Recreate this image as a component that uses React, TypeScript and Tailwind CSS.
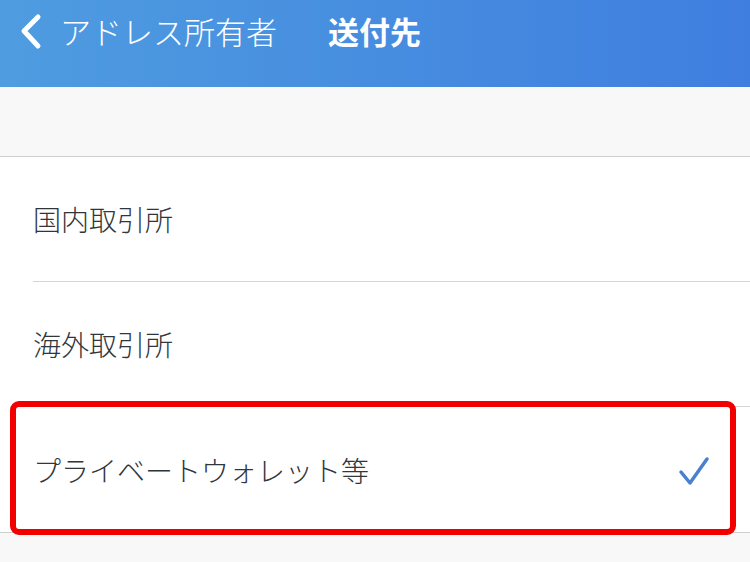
import React from "react";

type Row = { label: string; checked?: boolean; last?: boolean };

const rows: Row[] = [
  { label: "国内取引所" },
  { label: "海外取引所" },
  { label: "プライベートウォレット等", checked: true, last: true },
];

const font = { fontFamily: '"Noto Sans CJK JP", "Noto Sans", sans-serif' };

export default function App() {
  return (
    <div className="w-[750px] h-[562px] overflow-hidden bg-[#f8f8f8]" style={font}>
      {/* Nav bar */}
      <div className="h-[87px] bg-gradient-to-r from-[#4f9ce0] to-[#3f7edf] flex items-start pt-[8px] text-white">
        <svg width="30" height="40" viewBox="0 0 30 40" className="ml-[14px] mt-[4px]">
          <path d="M24 5 L10 19 L24 34" fill="none" stroke="white" strokeWidth="5" strokeLinecap="round" strokeLinejoin="round" />
        </svg>
        <span className="ml-[16px] text-[31px] font-light leading-[46px]">アドレス所有者</span>
        <span className="ml-[51px] text-[31px] font-bold leading-[46px]">送付先</span>
      </div>

      {/* Spacer band */}
      <div className="h-[70px] border-b border-[#cfcfcf]" />

      {/* List */}
      <div className="bg-white border-b border-[#cfcfcf] relative">
        {rows.map((r) => (
          <div key={r.label} className="pl-[33px] relative">
            <div
              className={
                "h-[125px] flex items-center pr-[40px] text-[28px] font-light text-[#30363c] " +
                (r.last ? "" : "border-b border-[#d4d4d4]")
              }
            >
              <span className="flex-1">{r.label}</span>
              {r.checked && (
                <svg width="32" height="32" viewBox="0 0 32 32" className="mt-[2px]">
                  <path d="M3 17 L12 28 L29 4" fill="none" stroke="#4a80d0" strokeWidth="3.5" strokeLinecap="round" strokeLinejoin="round" />
                </svg>
              )}
            </div>
          </div>
        ))}
        {/* highlight box */}
        <div className="absolute left-[10px] top-[244px] w-[726px] h-[134px] border-[6px] border-[#f20000] rounded-[9px] pointer-events-none" />
      </div>
    </div>
  );
}
